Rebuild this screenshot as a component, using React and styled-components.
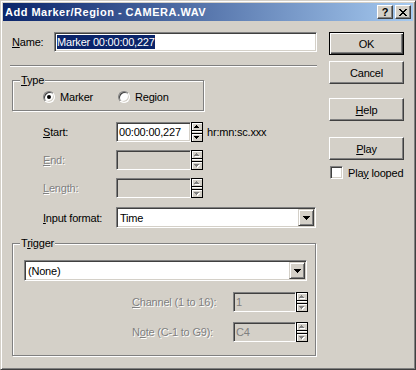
import React from 'react';
import styled, { createGlobalStyle, css } from 'styled-components';

const FACE = '#d4d0c8';

const Global = createGlobalStyle`
  html, body { margin: 0; padding: 0; background: ${FACE}; overflow: hidden; }
  body { font-family: "Liberation Sans", Arial, sans-serif; font-size: 11px; }
`;

const Window = styled.div`
  box-sizing: border-box;
  width: 416px;
  height: 370px;
  border: 1px solid;
  border-color: ${FACE} #404040 #404040 ${FACE};
  box-shadow: inset 1px 1px #fff, inset -1px -1px #808080;
  padding: 2px;
  background: ${FACE};
  display: flex;
  flex-direction: column;
  font-family: "Liberation Sans", Arial, sans-serif;
  font-size: 11px;
  letter-spacing: -0.2px;
  color: #000;
`;

const TitleBar = styled.div`
  flex: none;
  height: 18px;
  margin-bottom: 1px;
  padding: 0 2px;
  display: flex;
  align-items: center;
  background: linear-gradient(to right, #0a246a, #a6caf0);
`;

const Title = styled.div`
  color: #fff;
  font-weight: bold;
  font-size: 11px;
  letter-spacing: 0.5px;
  line-height: 18px;
  white-space: nowrap;
`;

const CaptionButtons = styled.div`
  margin-left: auto;
  display: flex;
  gap: 2px;
`;

const CaptionButton = styled.div`
  box-sizing: border-box;
  width: 16px;
  height: 14px;
  background: ${FACE};
  border: 1px solid;
  border-color: #fff #404040 #404040 #fff;
  box-shadow: inset -1px -1px #808080;
  display: flex;
  align-items: center;
  justify-content: center;
  font-weight: bold;
  font-size: 11px;
  letter-spacing: 0;
  line-height: 1;
  color: #000;
`;

const Client = styled.div`
  display: flex;
  padding: 10px 0 0 9px;
`;

const LeftCol = styled.div`
  width: 305px;
  display: flex;
  flex-direction: column;
`;

const RightCol = styled.div`
  margin-left: 12px;
  width: 75px;
  display: flex;
  flex-direction: column;
`;

const Acc = styled.span`
  text-decoration: underline;
  text-underline-offset: 1px;
`;

const Label = styled.div`
  flex: none;
  width: ${(p) => p.$w || 'auto'};
  margin-left: ${(p) => p.$indent || 0}px;
  white-space: nowrap;
  line-height: 14px;
  ${(p) =>
    p.$disabled &&
    css`
      color: #808080;
      text-shadow: 1px 1px 0 #fff;
    `}
`;

const Row = styled.div`
  display: flex;
  align-items: center;
  height: ${(p) => p.$h || 20}px;
  margin-top: ${(p) => p.$mt || 0}px;
`;

const sunken = css`
  box-sizing: border-box;
  border: 1px solid;
  border-color: #808080 #fff #fff #808080;
  box-shadow: inset 1px 1px #404040, inset -1px -1px ${FACE};
`;

const Edit = styled.div`
  ${sunken};
  flex: none;
  width: ${(p) => p.$w}px;
  height: 20px;
  padding: 0 2px;
  display: flex;
  align-items: center;
  white-space: nowrap;
  background: ${(p) => (p.$disabled ? FACE : '#fff')};
  color: ${(p) => (p.$disabled ? '#808080' : '#000')};
`;

const Selected = styled.span`
  background: #0a246a;
  color: #fff;
  line-height: 14px;
`;

const Separator = styled.div`
  margin: 13px 0 0 -2px;
  width: 307px;
  height: 0;
  border-top: 1px solid #808080;
  border-bottom: 1px solid #fff;
`;

const GroupBox = styled.div`
  position: relative;
  box-sizing: border-box;
  width: ${(p) => p.$w}px;
  height: ${(p) => p.$h}px;
  margin-top: ${(p) => p.$mt}px;
  border: 1px solid #808080;
  box-shadow: inset 1px 1px #fff, 1px 1px #fff;
  padding: ${(p) => p.$pad || '0'};
`;

const GroupLabel = styled.div`
  position: absolute;
  top: -8px;
  left: 7px;
  padding: 0 1px;
  background: ${FACE};
  line-height: 14px;
`;

const RadioRow = styled.div`
  display: flex;
  align-items: center;
  height: 100%;
  padding: 2px 0 0 30px;
  box-sizing: border-box;
`;

const RadioItem = styled.label`
  display: flex;
  align-items: center;
  width: ${(p) => p.$w || 'auto'};
`;

const RadioCircle = styled.span`
  position: relative;
  box-sizing: border-box;
  width: 12px;
  height: 12px;
  border-radius: 50%;
  border: 1px solid;
  border-color: #808080 #fff #fff #808080;
  box-shadow: inset 1px 1px #404040, inset -1px -1px ${FACE};
  background: #fff;
  margin-right: 5px;
  ${(p) =>
    p.$checked &&
    css`
      &::after {
        content: '';
        position: absolute;
        left: 3px;
        top: 3px;
        width: 4px;
        height: 4px;
        border-radius: 50%;
        background: #000;
      }
    `}
`;

const SpinBox = styled.div`
  flex: none;
  box-sizing: border-box;
  width: 12px;
  height: 20px;
  border: 1px solid #000;
  background: ${FACE};
  display: flex;
  flex-direction: column;
`;

const SpinPart = styled.div`
  height: 7px;
  display: flex;
  align-items: center;
  justify-content: center;
  box-shadow: inset 1px 1px #fff;
`;

const SpinDivider = styled.div`
  box-sizing: border-box;
  height: 4px;
  border-top: 1px solid #000;
  border-bottom: 1px solid #000;
  box-shadow: inset 0 1px #fff;
`;

const Unit = styled.div`
  margin-left: 4px;
  white-space: nowrap;
`;

const Combo = styled.div`
  ${sunken};
  flex: none;
  width: ${(p) => p.$w}px;
  height: 21px;
  padding: 1px;
  display: flex;
  align-items: center;
  background: #fff;
`;

const ComboText = styled.div`
  flex: 1;
  margin-left: 2px;
  white-space: nowrap;
`;

const ComboButton = styled.div`
  box-sizing: border-box;
  width: 16px;
  height: 17px;
  background: ${FACE};
  border: 1px solid;
  border-color: ${FACE} #404040 #404040 ${FACE};
  box-shadow: inset 1px 1px #fff, inset -1px -1px #808080;
  display: flex;
  align-items: center;
  justify-content: center;
`;

const Button = styled.div`
  box-sizing: border-box;
  width: 75px;
  height: 23px;
  margin-top: ${(p) => p.$mt || 0}px;
  background: ${FACE};
  display: flex;
  align-items: center;
  justify-content: center;
  border: 1px solid;
  ${(p) =>
    p.$default
      ? css`
          border-color: #000;
          box-shadow: inset 1px 1px #fff, inset -1px -1px #404040,
            inset -2px -2px #808080;
        `
      : css`
          border-color: #fff #404040 #404040 #fff;
          box-shadow: inset -1px -1px #808080;
        `}
`;

const CheckRow = styled.label`
  display: flex;
  align-items: center;
  margin-top: 6px;
  margin-left: 1px;
`;

const CheckBox = styled.span`
  ${sunken};
  width: 13px;
  height: 13px;
  background: #fff;
  margin-right: 5px;
`;

function Arrow({ dir, disabled }) {
  const rows = dir === 'up' ? [[2, 1], [1, 3], [0, 5]] : [[0, 5], [1, 3], [2, 1]];
  const fill = disabled ? '#808080' : '#000';
  return (
    <svg width="6" height="4" viewBox="0 0 6 4" shapeRendering="crispEdges">
      {disabled &&
        rows.map(([x, w], i) => (
          <rect key={'s' + i} x={x + 1} y={i + 1} width={w} height="1" fill="#fff" />
        ))}
      {rows.map(([x, w], i) => (
        <rect key={i} x={x} y={i} width={w} height="1" fill={fill} />
      ))}
    </svg>
  );
}

function Spinner({ disabled }) {
  return (
    <SpinBox>
      <SpinPart>
        <Arrow dir="up" disabled={disabled} />
      </SpinPart>
      <SpinDivider />
      <SpinPart>
        <Arrow dir="down" disabled={disabled} />
      </SpinPart>
    </SpinBox>
  );
}

function DropArrow() {
  return (
    <svg width="7" height="4" viewBox="0 0 7 4" shapeRendering="crispEdges">
      <rect x="0" y="0" width="7" height="1" fill="#000" />
      <rect x="1" y="1" width="5" height="1" fill="#000" />
      <rect x="2" y="2" width="3" height="1" fill="#000" />
      <rect x="3" y="3" width="1" height="1" fill="#000" />
    </svg>
  );
}

function CloseGlyph() {
  const px = [
    [0, 0], [1, 0], [6, 0], [7, 0],
    [1, 1], [2, 1], [5, 1], [6, 1],
    [2, 2], [3, 2], [4, 2], [5, 2],
    [3, 3], [4, 3],
    [2, 4], [3, 4], [4, 4], [5, 4],
    [1, 5], [2, 5], [5, 5], [6, 5],
    [0, 6], [1, 6], [6, 6], [7, 6],
  ];
  return (
    <svg width="8" height="7" viewBox="0 0 8 7" shapeRendering="crispEdges">
      {px.map(([x, y], i) => (
        <rect key={i} x={x} y={y} width="1" height="1" fill="#000" />
      ))}
    </svg>
  );
}

function Combobox({ w, value }) {
  return (
    <Combo $w={w}>
      <ComboText>{value}</ComboText>
      <ComboButton>
        <DropArrow />
      </ComboButton>
    </Combo>
  );
}

export default function App() {
  return (
    <>
      <Global />
      <Window>
        <TitleBar>
          <Title>Add Marker/Region - CAMERA.WAV</Title>
          <CaptionButtons>
            <CaptionButton>?</CaptionButton>
            <CaptionButton>
              <CloseGlyph />
            </CaptionButton>
          </CaptionButtons>
        </TitleBar>
        <Client>
          <LeftCol>
            <Row>
              <Label $w="42px">
                <Acc>N</Acc>ame:
              </Label>
              <Edit $w={263}>
                <Selected>Marker 00:00:00,227</Selected>
              </Edit>
            </Row>
            <Separator />
            <GroupBox $w={192} $h={31} $mt={13}>
              <GroupLabel>
                <Acc>T</Acc>ype
              </GroupLabel>
              <RadioRow>
                <RadioItem $w="75px">
                  <RadioCircle $checked />
                  Marker
                </RadioItem>
                <RadioItem>
                  <RadioCircle />
                  Region
                </RadioItem>
              </RadioRow>
            </GroupBox>
            <Row $mt={11}>
              <Label $indent={31} $w="73px">
                <Acc>S</Acc>tart:
              </Label>
              <Edit $w={75}>00:00:00,227</Edit>
              <Spinner />
              <Unit>hr:mn:sc.xxx</Unit>
            </Row>
            <Row $mt={8}>
              <Label $indent={31} $w="73px" $disabled>
                <Acc>E</Acc>nd:
              </Label>
              <Edit $w={75} $disabled />
              <Spinner disabled />
            </Row>
            <Row $mt={8}>
              <Label $indent={31} $w="73px" $disabled>
                <Acc>L</Acc>ength:
              </Label>
              <Edit $w={75} $disabled />
              <Spinner disabled />
            </Row>
            <Row $mt={9} $h={21}>
              <Label $indent={31} $w="73px">
                <Acc>I</Acc>nput format:
              </Label>
              <Combobox w={200} value="Time" />
            </Row>
            <GroupBox $w={304} $h={113} $mt={15} $pad="16px 0 0 11px">
              <GroupLabel>
                T<Acc>r</Acc>igger
              </GroupLabel>
              <Combobox w={283} value="(None)" />
              <Row $mt={11}>
                <Label $indent={108} $w="101px" $disabled>
                  <Acc>C</Acc>hannel (1 to 16):
                </Label>
                <Edit $w={63} $disabled>1</Edit>
                <Spinner disabled />
              </Row>
              <Row $mt={10}>
                <Label $indent={108} $w="101px" $disabled>
                  N<Acc>o</Acc>te (C-1 to G9):
                </Label>
                <Edit $w={63} $disabled>C4</Edit>
                <Spinner disabled />
              </Row>
            </GroupBox>
          </LeftCol>
          <RightCol>
            <Button $default>OK</Button>
            <Button $mt={6}>Cancel</Button>
            <Button $mt={14}>
              <span>
                <Acc>H</Acc>elp
              </span>
            </Button>
            <Button $mt={16}>
              <span>
                <Acc>P</Acc>lay
              </span>
            </Button>
            <CheckRow>
              <CheckBox />
              <span>
                Pla<Acc>y</Acc> looped
              </span>
            </CheckRow>
          </RightCol>
        </Client>
      </Window>
    </>
  );
}
